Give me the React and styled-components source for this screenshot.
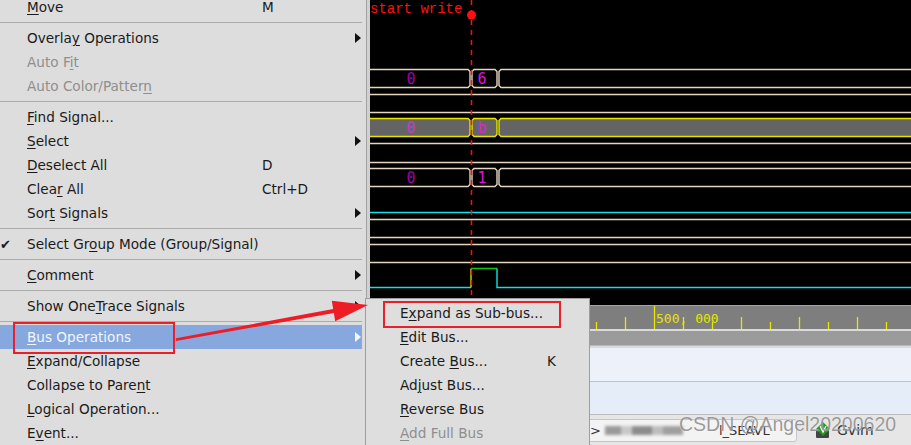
import React from "react";
import styled, { createGlobalStyle } from "styled-components";

const GlobalStyle = createGlobalStyle`
  html, body {
    margin: 0;
    padding: 0;
    background: #d4d4d4;
    overflow: hidden;
  }
  #root {
    width: 911px;
    height: 445px;
  }
`;

const mainItems = [
  { label: "Move", m: 0, shortcut: "M" },
  "sep",
  { label: "Overlay Operations", m: 6, arrow: true },
  { label: "Auto Fit", m: 6, disabled: true },
  { label: "Auto Color/Pattern", m: 17, disabled: true },
  "sep",
  { label: "Find Signal...", m: 0 },
  { label: "Select", m: 0, arrow: true },
  { label: "Deselect All", m: 0, shortcut: "D" },
  { label: "Clear All", m: 4, shortcut: "Ctrl+D" },
  { label: "Sort Signals", m: 3, arrow: true },
  "sep",
  { label: "Select Group Mode (Group/Signal)", m: 9, check: true },
  "sep",
  { label: "Comment", m: 0, arrow: true },
  "sep",
  { label: "Show OneTrace Signals", m: 8, arrow: true },
  "sep",
  { label: "Bus Operations", m: 0, arrow: true, active: true },
  { label: "Expand/Collapse", m: 0 },
  { label: "Collapse to Parent", m: 16 },
  { label: "Logical Operation...", m: 0 },
  { label: "Event...", m: 1 },
];

const busItems = [
  { label: "Expand as Sub-bus...", m: 1 },
  { label: "Edit Bus...", m: 0 },
  { label: "Create Bus...", m: 7, shortcut: "K" },
  { label: "Adjust Bus...", m: 2 },
  { label: "Reverse Bus", m: 0 },
  { label: "Add Full Bus", m: 0, disabled: true },
];

const Mnemonic = ({ label, m }) => (
  <>
    {label.slice(0, m)}
    <u>{label[m]}</u>
    {label.slice(m + 1)}
  </>
);

const MenuList = ({ items, labelWidth, indent, Box }) => (
  <Box>
    {items.map((it, i) =>
      it === "sep" ? (
        <Separator key={i} />
      ) : (
        <Row key={i} $active={it.active} $disabled={it.disabled}>
          <CheckCol $w={indent}>{it.check ? "✔" : ""}</CheckCol>
          <Label $w={labelWidth}>
            <Mnemonic label={it.label} m={it.m} />
          </Label>
          <Shortcut>{it.shortcut}</Shortcut>
          {it.arrow && <Arrow $active={it.active} />}
        </Row>
      )
    )}
  </Box>
);

const Bus = ({ t, b, stroke, fill, values }) => {
  const cells = [
    [-10, 100],
    [102, 127],
    [129, 600],
  ];
  return (
    <g>
      {cells.map(([x1, x2], i) => (
        <path
          key={i}
          d={`M${x1} ${t + 2} L${x1 + 2} ${t} L${x2 - 2} ${t} L${x2} ${t + 2} L${x2} ${b - 2} L${x2 - 2} ${b} L${x1 + 2} ${b} L${x1} ${b - 2} Z`}
          fill={fill}
          stroke={stroke}
          strokeWidth="1.4"
        />
      ))}
      {values.map(([x, v, c], i) => (
        <text
          key={i}
          x={x}
          y={(t + b) / 2 + 5.5}
          fill={c}
          fontSize="15"
          textAnchor="middle"
          fontFamily="'DejaVu Sans Mono', monospace"
        >
          {v}
        </text>
      ))}
    </g>
  );
};

const Waveform = () => {
  const beige = "#e4d6c0";
  const lines = [94, 112, 143, 162, 219, 237, 244, 262];
  return (
    <svg width="541" height="305" viewBox="0 0 541 305">
      <text x="0" y="13" fill="#ff1010" fontSize="14" fontFamily="'Liberation Mono', monospace">
        start write
      </text>
      <Bus t={69.5} b={87.5} stroke={beige} fill="none" values={[[41, "0", "#a000a8"], [112, "6", "#e010e0"]]} />
      <Bus t={118.5} b={136.5} stroke="#e6e600" fill="#646464" values={[[41, "0", "#c040c8"], [112, "b", "#e020e0"]]} />
      <Bus t={168.5} b={186.5} stroke={beige} fill="none" values={[[41, "0", "#a000a8"], [112, "1", "#e010e0"]]} />
      {lines.map((y) => (
        <line key={y} x1="0" x2="541" y1={y + 0.5} y2={y + 0.5} stroke={beige} strokeWidth="1.4" />
      ))}
      <line x1="0" x2="541" y1="212.5" y2="212.5" stroke="#10e0e8" strokeWidth="1.4" />
      <polyline points="0,287.5 101,287.5" fill="none" stroke="#10e0e8" strokeWidth="1.4" />
      <polyline points="101,287.5 101,268.5" fill="none" stroke="#c8e000" strokeWidth="1.4" />
      <polyline points="101,268.5 127,268.5" fill="none" stroke="#10c010" strokeWidth="1.6" />
      <polyline points="127,268.5 127,287.5 541,287.5" fill="none" stroke="#10e0e8" strokeWidth="1.4" />
      <line x1="101.5" x2="101.5" y1="0" y2="305" stroke="#ff1010" strokeWidth="1.5" strokeDasharray="5 5" />
      <circle cx="101.5" cy="15" r="4.5" fill="#ff1010" />
    </svg>
  );
};

const RulerTicks = () => {
  const ticks = [];
  for (let i = 0; i < 20; i++) {
    const x = 226 + i * 29 - 29 * 8;
    if (x < 0 || x > 541) continue;
    ticks.push(x);
  }
  return (
    <svg width="541" height="23" viewBox="0 0 541 23">
      {ticks.map((x) => {
        const k = Math.round((x - 284) / 29);
        const top = k === 0 ? 0 : Math.abs(k) % 2 === 0 ? 16 : 11;
        return <line key={x} x1={x + 0.5} x2={x + 0.5} y1={top} y2="23" stroke="#e6e600" strokeWidth="1.3" />;
      })}
      <text x="286" y="17" fill="#e6e600" fontSize="13" fontFamily="'DejaVu Sans Mono', monospace">
        500, 000
      </text>
    </svg>
  );
};

const Annotations = () => (
  <Overlay width="911" height="445" viewBox="0 0 911 445">
    <rect x="14" y="323" width="160" height="30" fill="none" stroke="#e8202a" strokeWidth="2" />
    <rect x="384" y="302" width="176" height="25" fill="none" stroke="#e8202a" strokeWidth="2" />
    <polygon
      points="176,338.3 333.2,309 331.8,300.8 368,305 335.2,321.2 333.9,313 176,341"
      fill="#ee1c25"
    />
  </Overlay>
);

export default function App() {
  return (
    <>
      <GlobalStyle />
      <Screen>
        <NamePane />
        <ViewPane>
          <Waves>
            <Waveform />
          </Waves>
          <Ruler>
            <RulerTicks />
          </Ruler>
          <LightStrip />
          <GrayBar />
          <LightStrip />
          <BlueArea>
            <BlueHalf $c="#edf2fa" />
            <BlueHalf $c="#e5edf8" />
          </BlueArea>
          <StatusBar>
            <InputBox>
              <span>&gt;</span>
              <Mosaic />
              <span>l_SEAVL</span>
            </InputBox>
            <VimIcon width="16" height="18" viewBox="0 0 16 18">
              <rect x="1" y="9" width="13" height="8" rx="1" fill="#444" />
              <path d="M8 1 L15 8 L8 15 L1 8 Z" fill="#1a9a1a" />
              <path d="M5 5 L8 11 L11 5" fill="none" stroke="#fff" strokeWidth="1.3" />
            </VimIcon>
            <StatusText>Gvim</StatusText>
          </StatusBar>
        </ViewPane>

        <MenuList items={mainItems} labelWidth={235} indent={27} Box={MainMenu} />
        <MenuList items={busItems} labelWidth={147} indent={34} Box={SubMenu} />

        <Watermark>CSDN @Angel20200620</Watermark>
        <Annotations />
      </Screen>
    </>
  );
}

const Screen = styled.div`
  position: relative;
  width: 911px;
  height: 445px;
  overflow: hidden;
  display: flex;
  font-family: "DejaVu Sans", "Noto Sans", sans-serif;
`;

const NamePane = styled.div`
  width: 370px;
  flex: none;
  background: #d0d0d0;
`;

const ViewPane = styled.div`
  flex: 1;
  display: flex;
  flex-direction: column;
  svg {
    display: block;
  }
`;

const Waves = styled.div`
  height: 305px;
  flex: none;
  background: #000;
`;

const Ruler = styled.div`
  height: 23px;
  flex: none;
  background: #7e7e7e;
  border-top: 1px solid #a4a4a4;
`;

const LightStrip = styled.div`
  height: 2px;
  flex: none;
  background: #dadada;
`;

const GrayBar = styled.div`
  height: 14px;
  flex: none;
  background: #9b9b9b;
  border-bottom: 1px solid #b8b8b8;
`;

const BlueArea = styled.div`
  height: 66px;
  flex: none;
  display: flex;
  flex-direction: column;
`;

const BlueHalf = styled.div`
  flex: 1;
  background: ${(p) => p.$c};
  & + & {
    border-top: 1px solid #adc5e6;
  }
`;

const StatusBar = styled.div`
  flex: 1;
  display: flex;
  align-items: center;
  gap: 6px;
  padding-left: 4px;
  background: #e6e6e6;
  border-top: 1px solid #bdbdbd;
`;

const InputBox = styled.div`
  width: 423px;
  height: 23px;
  box-sizing: border-box;
  display: flex;
  align-items: center;
  padding-left: 215px;
  background: #f3f3f3;
  border: 1px solid #c6c6c6;
  border-radius: 3px;
  font-size: 13px;
  color: #333;
  span + div {
    margin-left: 4px;
  }
  div + span {
    margin-left: 36px;
  }
`;

const Mosaic = styled.div`
  width: 78px;
  height: 9px;
  background: linear-gradient(90deg, #9a9a9a 0 20%, #c8c8c8 20% 35%, #8c8c8c 35% 60%, #bdbdbd 60% 75%, #a0a0a0 75%);
  filter: blur(1.5px);
`;

const VimIcon = styled.svg`
  margin-left: 12px;
`;

const StatusText = styled.span`
  font-size: 14px;
  color: #333;
`;

const MainMenu = styled.div`
  position: absolute;
  left: 0;
  top: -5px;
  width: 362px;
  padding-right: 4px;
  background: #dddddd;
  border-right: 1px solid #a2a2a2;
  border-bottom: 1px solid #a2a2a2;
`;

const SubMenu = styled.div`
  position: absolute;
  left: 365px;
  top: 298px;
  width: 223px;
  padding-top: 2px;
  height: 160px;
  background: #dedede;
  border: 1px solid #9e9e9e;
`;

const Separator = styled.div`
  height: 7px;
  position: relative;
  &::after {
    content: "";
    position: absolute;
    left: 0;
    right: 0;
    top: 3px;
    height: 1px;
    background: #ababab;
  }
`;

const Row = styled.div`
  height: 24px;
  display: flex;
  align-items: center;
  font-size: 13.6px;
  white-space: nowrap;
  color: ${(p) => (p.$active ? "#f2f5fb" : p.$disabled ? "#8e8e8e" : "#1a1a1a")};
  background: ${(p) => (p.$active ? "#86a8de" : "transparent")};
  u {
    text-decoration-thickness: 1px;
    text-underline-offset: 2px;
  }
`;

const CheckCol = styled.span`
  width: ${(p) => p.$w}px;
  flex: none;
  font-size: 13px;
  font-weight: bold;
  box-sizing: border-box;
`;

const Label = styled.span`
  width: ${(p) => p.$w}px;
  flex: none;
`;

const Shortcut = styled.span`
  flex: 1;
`;

const Arrow = styled.span`
  width: 0;
  height: 0;
  margin-right: 1px;
  border-top: 5px solid transparent;
  border-bottom: 5px solid transparent;
  border-left: 6px solid ${(p) => (p.$active ? "#f4f6fb" : "#111")};
`;

const Watermark = styled.div`
  position: absolute;
  left: 679px;
  top: 413px;
  font-family: "Liberation Sans", Arial, sans-serif;
  font-size: 19.5px;
  color: rgba(110, 110, 110, 0.7);
  text-shadow: 0 0 1px rgba(255, 255, 255, 0.9);
  white-space: nowrap;
`;

const Overlay = styled.svg`
  position: absolute;
  left: 0;
  top: 0;
  pointer-events: none;
`;
